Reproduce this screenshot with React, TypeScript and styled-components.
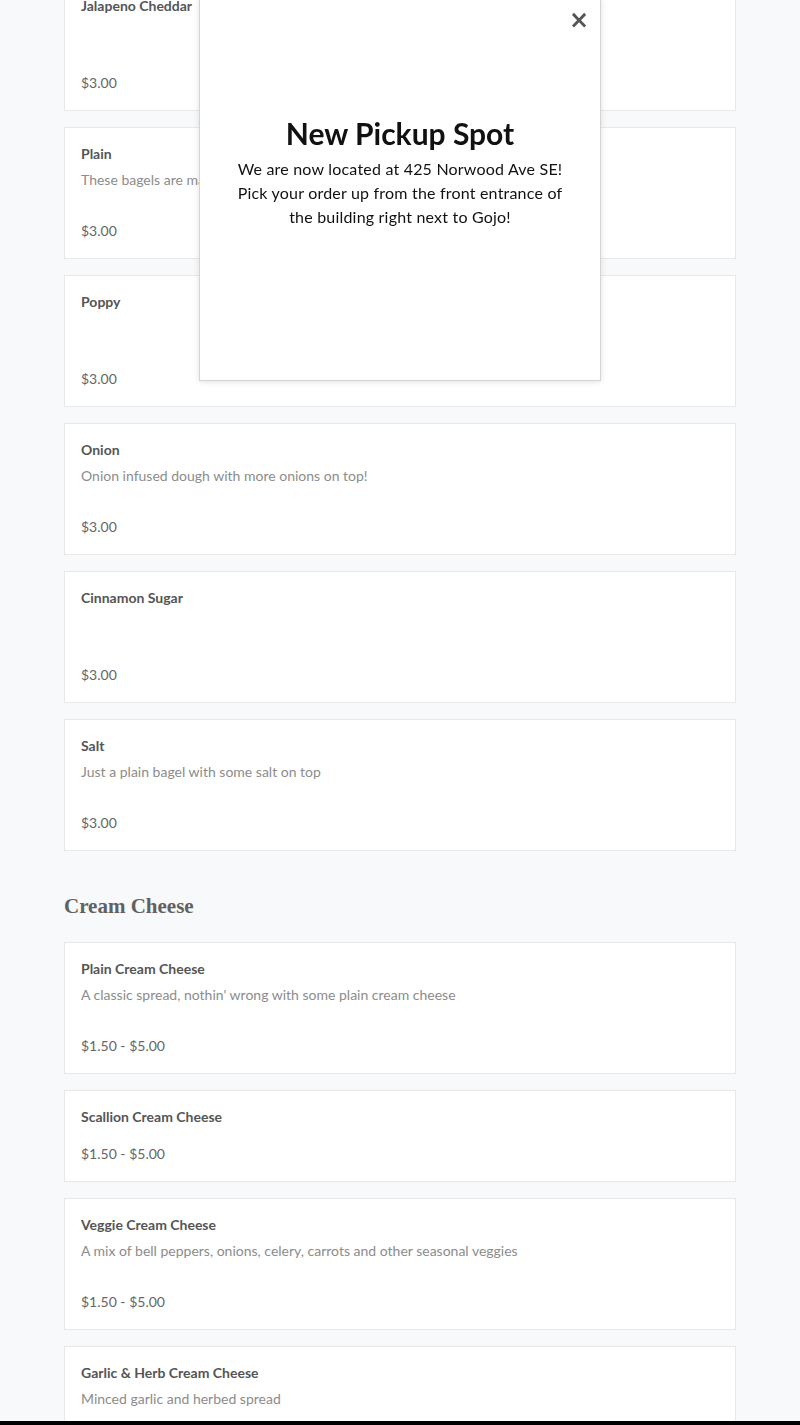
import React from "react";
import styled, { createGlobalStyle } from "styled-components";

const GlobalStyle = createGlobalStyle`
  html, body {
    margin: 0;
    padding: 0;
    background: #f8f9fa;
    overflow: hidden;
  }
  body {
    font-family: Lato, "Liberation Sans", sans-serif;
  }
`;

const Page = styled.div`
  width: 672px;
  margin: -21px auto 0;
  display: flex;
  flex-direction: column;
`;

const CardList = styled.div`
  display: flex;
  flex-direction: column;
  gap: 16px;
`;

const Card = styled.div`
  background: #fff;
  border: 1px solid #e7e8ea;
  padding: 16px 16px 17px;
  display: flex;
  flex-direction: column;
`;

const ItemName = styled.div`
  font-size: 14px;
  line-height: 20px;
  font-weight: 700;
  color: #555;
`;

const ItemDesc = styled.div`
  font-size: 14px;
  line-height: 20px;
  color: #8c8c8c;
  margin: 6px 0 14px;
  min-height: 20px;
  white-space: nowrap;
`;

const ItemPrice = styled.div`
  font-size: 14px;
  line-height: 20px;
  color: #666;
  margin-top: 17px;
`;

const SectionTitle = styled.h2`
  font-family: "Liberation Serif", "Times New Roman", serif;
  font-size: 21px;
  line-height: 30px;
  font-weight: 700;
  color: #616161;
  margin: 40px 0 21px;
`;

const Modal = styled.div`
  position: fixed;
  top: -2px;
  left: 199px;
  width: 402px;
  height: 383px;
  background: #fff;
  border: 1px solid #d4d4d4;
  box-shadow: 0 1px 6px rgba(0, 0, 0, 0.12);
  display: flex;
  flex-direction: column;
  align-items: center;
  padding-top: 115px;
  box-sizing: border-box;
`;

const CloseButton = styled.button`
  position: absolute;
  top: 9px;
  right: 11px;
  background: none;
  border: none;
  padding: 0;
  font-family: "DejaVu Sans", sans-serif;
  font-size: 24px;
  line-height: 24px;
  font-weight: 700;
  color: #555;
  cursor: pointer;
`;

const ModalTitle = styled.h1`
  margin: 0;
  font-family: Lato, "Open Sans", sans-serif;
  font-size: 30px;
  line-height: 38px;
  font-weight: 700;
  color: #111;
`;

const ModalText = styled.p`
  margin: 5px 0 0;
  font-family: Lato, "Open Sans", sans-serif;
  font-size: 16px;
  line-height: 24px;
  color: #111;
  text-align: center;
  letter-spacing: 0.2px;
`;

const BottomBar = styled.div`
  position: fixed;
  left: 0;
  right: 0;
  bottom: 0;
  height: 4px;
  background: #000;
`;

type Item = { name: string; desc?: string | null; price: string };

const bagels: Item[] = [
  { name: "Jalapeno Cheddar", desc: "", price: "$3.00" },
  { name: "Plain", desc: "These bagels are made with love and care, a classic.", price: "$3.00" },
  { name: "Poppy", desc: "", price: "$3.00" },
  { name: "Onion", desc: "Onion infused dough with more onions on top!", price: "$3.00" },
  { name: "Cinnamon Sugar", desc: "", price: "$3.00" },
  { name: "Salt", desc: "Just a plain bagel with some salt on top", price: "$3.00" },
];

const cheeses: Item[] = [
  { name: "Plain Cream Cheese", desc: "A classic spread, nothin' wrong with some plain cream cheese", price: "$1.50 - $5.00" },
  { name: "Scallion Cream Cheese", desc: null, price: "$1.50 - $5.00" },
  { name: "Veggie Cream Cheese", desc: "A mix of bell peppers, onions, celery, carrots and other seasonal veggies", price: "$1.50 - $5.00" },
  { name: "Garlic & Herb Cream Cheese", desc: "Minced garlic and herbed spread", price: "$1.50 - $5.00" },
];

function MenuCard({ item }: { item: Item }) {
  return (
    <Card>
      <ItemName>{item.name}</ItemName>
      {item.desc !== null && item.desc !== undefined && <ItemDesc>{item.desc}</ItemDesc>}
      <ItemPrice>{item.price}</ItemPrice>
    </Card>
  );
}

export default function App() {
  return (
    <>
      <GlobalStyle />
      <Page>
        <CardList>
          {bagels.map((b) => (
            <MenuCard key={b.name} item={b} />
          ))}
        </CardList>
        <SectionTitle>Cream Cheese</SectionTitle>
        <CardList>
          {cheeses.map((c) => (
            <MenuCard key={c.name} item={c} />
          ))}
        </CardList>
      </Page>
      <Modal>
        <CloseButton aria-label="Close">×</CloseButton>
        <ModalTitle>New Pickup Spot</ModalTitle>
        <ModalText>
          We are now located at 425 Norwood Ave SE!
          <br />
          Pick your order up from the front entrance of
          <br />
          the building right next to Gojo!
        </ModalText>
      </Modal>
      <BottomBar />
    </>
  );
}
